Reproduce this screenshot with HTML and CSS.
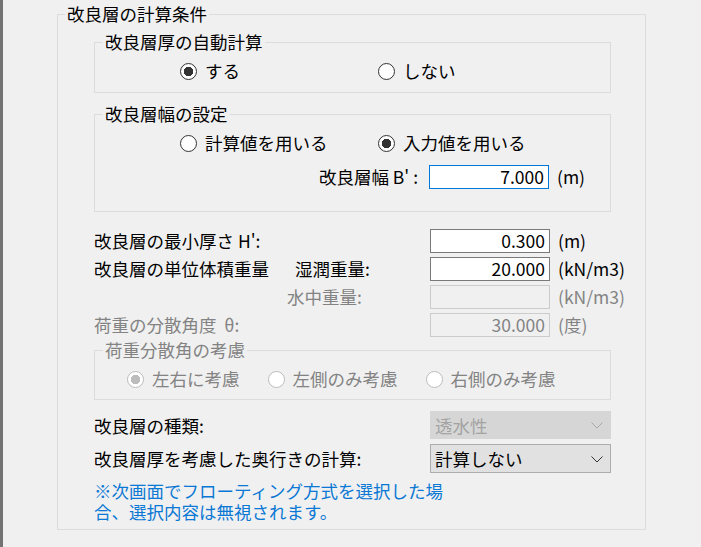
FILE: index.html
```html
<!DOCTYPE html>
<html lang="ja">
<head>
  <meta charset="UTF-8">
  <meta name="viewport" content="width=device-width, initial-scale=1.0">
  <title>改良層の計算条件</title>

  <link rel="stylesheet" href="styles.css">
</head>
<body>
  <form>
    <fieldset class="outer">
      <legend>改良層の計算条件</legend>

      <!-- 改良層厚 -->
      <fieldset class="group first">
        <legend>改良層厚の自動計算</legend>
        <div class="choices pair">
          <label class="radio"><input type="radio" name="auto" checked>する</label>
          <label class="radio"><input type="radio" name="auto">しない</label>
        </div>
      </fieldset>

      <!-- 改良層幅 -->
      <fieldset class="group width">
        <legend>改良層幅の設定</legend>
        <div class="choices pair">
          <label class="radio"><input type="radio" name="width">計算値を用いる</label>
          <label class="radio"><input type="radio" name="width" checked>入力値を用いる</label>
        </div>
        <div class="row b-row">
          <label for="b" class="right">改良層幅&nbsp;B'&nbsp;:</label>
          <input type="text" id="b" class="num focus" value="7.000">
          <span class="unit">(m)</span>
        </div>
      </fieldset>

      <div class="rows">
        <div class="row">
          <label for="h">改良層の最小厚さ H':</label>
          <input type="text" id="h" class="num" value="0.300">
          <span class="unit">(m)</span>
        </div>
        <div class="row">
          <label for="wet"><span>改良層の単位体積重量</span><span class="sub">湿潤重量:</span></label>
          <input type="text" id="wet" class="num" value="20.000">
          <span class="unit">(kN/m3)</span>
        </div>
        <div class="row off">
          <label for="sub" class="under">水中重量:</label>
          <input type="text" id="sub" class="num" value="" disabled>
          <span class="unit">(kN/m3)</span>
        </div>
        <div class="row off">
          <label for="theta">荷重の分散角度&nbsp;&nbsp;θ:</label>
          <input type="text" id="theta" class="num" value="30.000" disabled>
          <span class="unit">(度)</span>
        </div>
      </div>

      <!-- 荷重分散角 (disabled) -->
      <fieldset class="group spread off" disabled>
        <legend>荷重分散角の考慮</legend>
        <div class="choices three">
          <label class="radio"><input type="radio" name="spread" checked>左右に考慮</label>
          <label class="radio"><input type="radio" name="spread">左側のみ考慮</label>
          <label class="radio"><input type="radio" name="spread">右側のみ考慮</label>
        </div>
      </fieldset>

      <div class="row combo-row kind">
        <label for="kind">改良層の種類:</label>
        <div class="select-wrapper">
          <select id="kind" disabled>
            <option>透水性</option>
          </select>
          <svg class="chevron" width="12" height="7" viewBox="0 0 12 7"><polyline points="0.5,0.5 6,6 11.5,0.5" fill="none" stroke="currentColor" stroke-width="1"/></svg>
        </div>
      </div>

      <div class="row combo-row depth">
        <label for="depth">改良層厚を考慮した奥行きの計算:</label>
        <div class="select-wrapper">
          <select id="depth">
            <option>計算しない</option>
            <option>計算する</option>
          </select>
          <svg class="chevron" width="12" height="7" viewBox="0 0 12 7"><polyline points="0.5,0.5 6,6 11.5,0.5" fill="none" stroke="currentColor" stroke-width="1"/></svg>
        </div>
      </div>

      <p class="note">※次画面でフローティング方式を選択した場<br>合、選択内容は無視されます。</p>
    </fieldset>
  </form>
</body>
</html>
```

FILE: styles.css
```css
body {
  margin: 0;
  min-height: 100vh;
  box-sizing: border-box;
  padding: 4px 0 0 54px;
  border-left: 3px solid #737373;
  background: #f0f0f0;
  font-family: "Noto Sans CJK JP", sans-serif;
  font-size: 17.5px;
  color: #000;
}

form {
  margin: 0;
}

fieldset {
  margin: 0;
  padding: 0;
  min-width: 0;
  border: 1px solid #dcdcdc;
}

legend {
  margin-left: 8px;
  padding: 0 2px;
  line-height: 20px;
}

.outer {
  box-sizing: border-box;
  width: 589px;
  padding: 8px 34px 7px 36px;

  /* legend sits inside the padding, pull it back to the border */
  & > legend {
    margin-left: -29px;
  }
}

/* group boxes */
.group.first {
  padding-bottom: 9px;
}

.group.width {
  margin-top: 11px;
  padding-bottom: 23px;
}

.group.spread {
  margin-top: 4px;
  padding-bottom: 8px;
}

.choices {
  height: 24px;
  margin-top: 7px;
}

.pair {
  display: grid;
  grid-template-columns: 198px 198px;
  padding-left: 85px;
}

.three {
  display: flex;
  gap: 28px;
  padding-left: 32px;
}

.radio {
  display: flex;
  align-items: center;
  gap: 8px;
  line-height: 24px;
  white-space: nowrap;

  & input {
    appearance: none;
    box-sizing: border-box;
    width: 17px;
    height: 17px;
    margin: 0;
    border: 1px solid #333;
    border-radius: 50%;
    background: #fff;
  }

  & input:checked {
    background: radial-gradient(circle, #333 0 4.5px, #fff 5px);
  }
}

.off .radio input {
  border-color: #bcbcbc;
}

.off .radio input:checked {
  background: radial-gradient(circle, #bcbcbc 0 4.5px, #fff 5px);
}

/* label / input / unit rows */
.row {
  display: grid;
  grid-template-columns: 1fr 120px 61px;
  align-items: center;
  height: 24px;
  white-space: nowrap;

  & label {
    display: flex;
  }

  & .right {
    justify-content: flex-end;
    padding-right: 11px;
  }

  & .sub {
    margin-left: 26px;
  }

  & .under {
    padding-left: 193px;
  }

  & .unit {
    padding-left: 8px;
  }
}

.b-row {
  margin-top: 9px;
}

.rows {
  display: flex;
  flex-direction: column;
  gap: 4px;
  margin-top: 16px;
}

input.num {
  box-sizing: border-box;
  width: 120px;
  height: 24px;
  margin: 0;
  padding: 0 4px;
  border: 1px solid #7a7a7a;
  background: #fff;
  font: inherit;
  line-height: 22px;
  text-align: right;
  color: #000;
  outline: none;
}

input.num.focus {
  border-color: #0078d7;
}

input.num:disabled {
  border-color: #cccccc;
  background: #f0f0f0;
  color: #838383;
}

.off,
.off legend {
  color: #838383;
}

/* combo boxes */
.combo-row {
  height: auto;

  & .select-wrapper {
    grid-column: 2 / 4;
    position: relative;
    color: #333;
  }

  & select {
    appearance: none;
    box-sizing: border-box;
    width: 100%;
    margin: 0;
    padding: 0 4px;
    border: 1px solid #adadad;
    border-radius: 0;
    background: #e1e1e1;
    font: inherit;
    color: #000;
  }

  & select:disabled {
    border-color: #cccccc;
    background: #cccccc;
    color: #838383;
  }

  & .chevron {
    position: absolute;
    right: 8px;
    top: 50%;
    margin-top: -3px;
  }
}

.kind {
  margin-top: 11px;

  & select {
    height: 28px;
  }

  & .select-wrapper {
    color: #a8a8a8;
  }
}

.depth {
  margin-top: 5px;

  & select {
    height: 29px;
  }
}

.note {
  margin: 7px 0 0;
  line-height: 21px;
  color: #0a78d4;
}
```
